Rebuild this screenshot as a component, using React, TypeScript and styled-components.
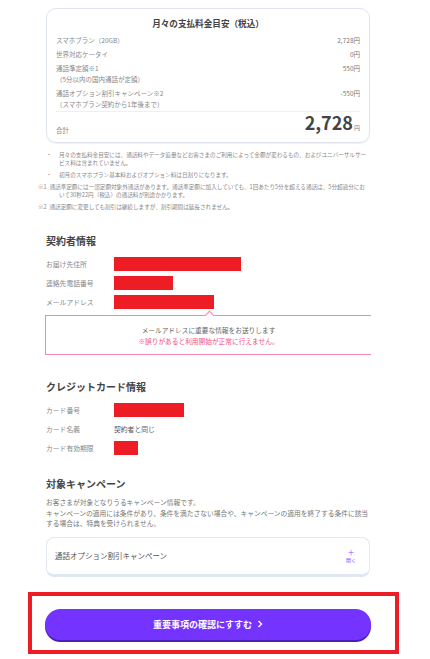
import React from "react";
import styled, { createGlobalStyle } from "styled-components";

const GlobalStyle = createGlobalStyle`
  html, body {
    margin: 0;
    padding: 0;
    background: #fff;
  }
  body {
    font-family: "Noto Sans CJK JP", "Noto Sans", sans-serif;
    color: #666;
  }
`;

interface FeeItem {
  name: string[];
  price: string;
}

interface InfoItem {
  label: string;
  bar?: number;
  text?: string;
}

const fees: FeeItem[] = [
  { name: ["スマホプラン（20GB）"], price: "2,728円" },
  { name: ["世界対応ケータイ"], price: "0円" },
  { name: ["通話準定額※1", "（5分以内の国内通話が定額）"], price: "550円" },
  {
    name: ["通話オプション割引キャンペーン※2", "（スマホプラン契約から1年後まで）"],
    price: "-550円",
  },
];

const contractRows: InfoItem[] = [
  { label: "お届け先住所", bar: 127 },
  { label: "連絡先電話番号", bar: 59 },
  { label: "メールアドレス", bar: 100 },
];

const cardRows: InfoItem[] = [
  { label: "カード番号", bar: 70 },
  { label: "カード名義", text: "契約者と同じ" },
  { label: "カード有効期限", bar: 24 },
];

const App: React.FC = () => (
  <React.Fragment>
    <GlobalStyle />
    <Page>
      <Content>
        <FeeCard>
          <FeeTitle>月々の支払料金目安（税込）</FeeTitle>
          {fees.map((fee) => (
            <FeeRow key={fee.price + fee.name[0]}>
              <FeeName>
                {fee.name.map((line) => (
                  <div key={line}>{line}</div>
                ))}
              </FeeName>
              <FeePrice>{fee.price}</FeePrice>
            </FeeRow>
          ))}
          <TotalRow>
            <TotalLabel>合計</TotalLabel>
            <TotalPrice>
              2,728<small>円</small>
            </TotalPrice>
          </TotalRow>
        </FeeCard>

        <Notes>
          <BulletNote>
            <span>・</span>
            <p>
              月々の支払料金目安には、通話料やデータ追量などお客さまのご利用によって金額が変わるもの、およびユニバーサルサービス料は含まれていません。
            </p>
          </BulletNote>
          <BulletNote>
            <span>・</span>
            <p>初月のスマホプラン基本料およびオプション料は日割りになります。</p>
          </BulletNote>
          <MarkNote>
            ※1&ensp;通話準定額には一部定額対象外通話があります。通話準定額に加入していても、1回あたり5分を超える通話は、5分超過分において30秒22円（税込）の通話料が別途かかります。
          </MarkNote>
          <MarkNote>
            ※2&ensp;通話定額に変更しても割引は継続しますが、割引期間は延長されません。
          </MarkNote>
        </Notes>

        <SectionTitle $gap={23}>契約者情報</SectionTitle>
        <InfoList>
          {contractRows.map((row) => (
            <InfoRow key={row.label}>
              <InfoLabel>{row.label}</InfoLabel>
              {row.bar ? <Redacted $w={row.bar} /> : <InfoValue>{row.text}</InfoValue>}
            </InfoRow>
          ))}
        </InfoList>
        <MailNotice>
          <p>メールアドレスに重要な情報をお送りします</p>
          <Warn>※誤りがあると利用開始が正常に行えません。</Warn>
        </MailNotice>

        <SectionTitle>クレジットカード情報</SectionTitle>
        <InfoList>
          {cardRows.map((row) => (
            <InfoRow key={row.label}>
              <InfoLabel>{row.label}</InfoLabel>
              {row.bar ? <Redacted $w={row.bar} /> : <InfoValue>{row.text}</InfoValue>}
            </InfoRow>
          ))}
        </InfoList>

        <SectionTitle $gap={22}>対象キャンペーン</SectionTitle>
        <CampaignText>
          お客さまが対象となりうるキャンペーン情報です。
          <br />
          キャンペーンの適用には条件があり、条件を満たさない場合や、キャンペーンの適用を終了する条件に該当する場合は、特典を受けられません。
        </CampaignText>
        <Accordion>
          <span>通話オプション割引キャンペーン</span>
          <OpenToggle>
            <b>＋</b>
            <span>開く</span>
          </OpenToggle>
        </Accordion>
      </Content>

      <Highlight>
        <NextButton>
          重要事項の確認にすすむ
          <svg width="6" height="8" viewBox="0 0 6 8">
            <path d="M1.5 1 L4.5 4 L1.5 7" fill="none" stroke="#fff" strokeWidth="1.4" />
          </svg>
        </NextButton>
      </Highlight>
    </Page>
  </React.Fragment>
);

const Page = styled.div`
  width: 430px;
  padding-top: 8px;
  padding-bottom: 5px;
`;

const Content = styled.div`
  width: 324px;
  margin-left: 46px;
`;

const FeeCard = styled.div`
  border: 1px solid #dfe4ee;
  border-radius: 10px;
  padding: 8px 9px 4px 9px;
  box-shadow: 0 1px 0 #eef1f6;
`;

const FeeTitle = styled.div`
  font-size: 8.6px;
  line-height: 12px;
  font-weight: 700;
  color: #444;
  text-align: center;
  margin-bottom: 4px;
`;

const FeeRow = styled.div`
  display: flex;
  justify-content: space-between;
  padding: 1.5px 0;
  font-size: 6.5px;
  line-height: 11px;
  color: #888;
`;

const FeeName = styled.div``;

const FeePrice = styled.div`
  color: #777;
`;

const TotalRow = styled.div`
  display: flex;
  justify-content: space-between;
  align-items: flex-end;
  height: 26px;
  border-top: 1px solid #eceff4;
`;

const TotalLabel = styled.div`
  font-size: 6.5px;
  line-height: 11px;
  color: #888;
  padding-bottom: 2px;
`;

const TotalPrice = styled.div`
  font-size: 18px;
  line-height: 20px;
  font-weight: 700;
  color: #444;
  small {
    font-size: 6px;
    font-weight: 400;
    color: #777;
    margin-left: 1px;
  }
`;

const Notes = styled.div`
  margin-top: 8px;
  display: flex;
  flex-direction: column;
  gap: 4px;
  font-size: 5.6px;
  line-height: 8px;
  color: #888;
`;

const BulletNote = styled.div`
  display: flex;
  span {
    width: 13px;
    flex: none;
  }
  p {
    margin: 0;
  }
`;

const MarkNote = styled.p`
  margin: 0;
  padding-left: 13px;
  text-indent: -21px;
`;

const SectionTitle = styled.h2<{ $gap?: number }>`
  margin: ${(p) => p.$gap ?? 25}px 0 0 0;
  font-size: 10px;
  line-height: 14px;
  font-weight: 700;
  color: #444;
`;

const InfoList = styled.div`
  margin-top: 9px;
  display: flex;
  flex-direction: column;
  gap: 5px;
`;

const InfoRow = styled.div`
  display: flex;
  align-items: center;
  height: 14px;
`;

const InfoLabel = styled.div`
  width: 68px;
  flex: none;
  font-size: 6.8px;
  color: #888;
`;

const InfoValue = styled.div`
  font-size: 6.8px;
  color: #555;
`;

const Redacted = styled.div<{ $w: number }>`
  width: ${(p) => p.$w}px;
  height: 14px;
  background: #ee1c25;
`;

const MailNotice = styled.div`
  position: relative;
  margin: 6px 0 0 -1px;
  width: 326px;
  box-sizing: border-box;
  border: 1px solid #f08aa8;
  border-right: none;
  padding: 9px 0 7px;
  text-align: center;
  font-size: 6.7px;
  line-height: 11px;
  color: #666;
  p {
    margin: 0;
  }
  &::before {
    content: "";
    position: absolute;
    top: -4px;
    left: 50%;
    width: 6px;
    height: 6px;
    margin-left: -3px;
    background: #fff;
    border-top: 1px solid #f08aa8;
    border-left: 1px solid #f08aa8;
    transform: rotate(45deg);
  }
`;

const Warn = styled.p`
  color: #f0508a;
`;

const CampaignText = styled.p`
  margin: 6px 0 0 0;
  font-size: 6.74px;
  line-height: 10.5px;
  color: #777;
`;

const Accordion = styled.div`
  margin-top: 8px;
  height: 40px;
  box-sizing: border-box;
  border: 1px solid #e3e8f0;
  border-bottom: 3px solid #e1e7f1;
  border-radius: 8px;
  display: flex;
  align-items: center;
  justify-content: space-between;
  padding: 0 13px 0 8px;
  font-size: 7.5px;
  color: #555;
`;

const OpenToggle = styled.div`
  display: flex;
  flex-direction: column;
  align-items: center;
  color: #7a4cff;
  line-height: 7px;
  b {
    font-size: 7px;
    font-weight: 400;
  }
  span {
    font-size: 5px;
  }
`;

const Highlight = styled.div`
  margin: 15px 0 0 28px;
  width: 371px;
  box-sizing: border-box;
  border: 4px solid #ee1c25;
  padding: 13px 24px 10px 13px;
`;

const NextButton = styled.button`
  display: flex;
  width: 326px;
  height: 31px;
  align-items: center;
  justify-content: center;
  gap: 5px;
  border: none;
  border-radius: 16px;
  background: #7433ff;
  box-shadow: 0 2px 0 #4a1fb8;
  color: #fff;
  font-family: "Noto Sans CJK JP", sans-serif;
  font-size: 9px;
  font-weight: 700;
  cursor: pointer;
  padding: 0;
`;

export default App;
